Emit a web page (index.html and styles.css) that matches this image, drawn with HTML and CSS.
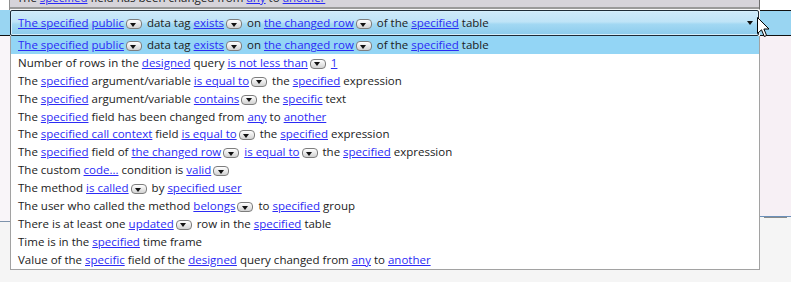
FILE: index.html
```html
<!DOCTYPE html>
<html lang="en">
<head>
    <meta charset="UTF-8">
    <title>Condition picker</title>
    <link rel="stylesheet" href="styles.css">
</head>
<body>

<div class="screen">
    <!-- top strip: previous row, mostly scrolled away -->
    <div class="side-top"></div>
    <div class="prev-row">
        <div class="line">The <a class="lnk">specified</a> field has been changed from <a class="lnk">any</a> to <a class="lnk">another</a></div>
    </div>
    <div class="side-top right"></div>

    <!-- combo row -->
    <div class="side-blue"></div>
    <div class="combo">
        <div class="line"><a class="lnk">The specified</a> <a class="lnk">public</a><span class="dd"></span> data tag <a class="lnk">exists</a><span class="dd"></span> on <a class="lnk">the changed row</a><span class="dd"></span> of the <a class="lnk">specified</a> table</div>
        <span class="combo-arrow"></span>
    </div>
    <div class="side-blue right"></div>

    <!-- dropdown list -->
    <div class="side-panel"></div>
    <div class="list">
        <div class="item selected"><a class="lnk">The specified</a> <a class="lnk">public</a><span class="dd"></span> data tag <a class="lnk">exists</a><span class="dd"></span> on <a class="lnk">the changed row</a><span class="dd"></span> of the <a class="lnk">specified</a> table</div>
        <div class="item">Number of rows in the <a class="lnk">designed</a> query <a class="lnk">is not less than</a><span class="dd"></span> <a class="lnk">1</a></div>
        <div class="item">The <a class="lnk">specified</a> argument/variable <a class="lnk">is equal to</a><span class="dd"></span> the <a class="lnk">specified</a> expression</div>
        <div class="item">The <a class="lnk">specified</a> argument/variable <a class="lnk">contains</a><span class="dd"></span> the <a class="lnk">specific</a> text</div>
        <div class="item">The <a class="lnk">specified</a> field has been changed from <a class="lnk">any</a> to <a class="lnk">another</a></div>
        <div class="item">The <a class="lnk">specified call context</a> field <a class="lnk">is equal to</a><span class="dd"></span> the <a class="lnk">specified</a> expression</div>
        <div class="item">The <a class="lnk">specified</a> field of <a class="lnk">the changed row</a><span class="dd"></span> <a class="lnk">is equal to</a><span class="dd"></span> the <a class="lnk">specified</a> expression</div>
        <div class="item">The custom <a class="lnk">code...</a> condition is <a class="lnk">valid</a><span class="dd"></span></div>
        <div class="item">The method <a class="lnk">is called</a><span class="dd"></span> by <a class="lnk">specified user</a></div>
        <div class="item">The user who called the method <a class="lnk">belongs</a><span class="dd"></span> to <a class="lnk">specified</a> group</div>
        <div class="item">There is at least one <a class="lnk">updated</a><span class="dd"></span> row in the <a class="lnk">specified</a> table</div>
        <div class="item">Time is in the <a class="lnk">specified</a> time frame</div>
        <div class="item">Value of the <a class="lnk">specific</a> field of the <a class="lnk">designed</a> query changed from <a class="lnk">any</a> to <a class="lnk">another</a></div>
    </div>
    <div class="side-panel right"></div>

    <!-- mouse pointer over the combo's right edge -->
    <svg class="cursor" width="13" height="21" viewBox="0 0 13 21">
        <path d="M0.5 0.5 L0.5 16.5 L4.5 12.8 L7.3 19.5 L9.6 18.5 L6.9 12 L12 12 Z" fill="#fff" stroke="#000" stroke-width="1"/>
    </svg>
</div>

</body>
</html>
```

FILE: styles.css
```css
body {
    margin: 0;
    padding: 0;
    background-color: #f5f5f5;
    font-family: "Open Sans", "Noto Sans", Arial, sans-serif;
    font-size: 11.5px;
    color: #1b1b1b;
}
.screen {
    position: relative;
    width: 791px;
    height: 282px;
    overflow: hidden;
    display: grid;
    grid-template-columns: 10px 750px 31px;
    grid-template-rows: 10px 26px 1fr;
}
.lnk {
    color: #2b2bf5;
    text-decoration: underline;
}
.line {
    white-space: nowrap;
    line-height: 18px;
}

/* top strip */
.side-top {
    background-color: #ffffff;
    border-right: 1px solid #8f8f8f;
}
.side-top.right {
    border-right: none;
}
.prev-row {
    background-color: #d6d4da;
    border-right: 1px solid #6f6f6f;
    border-bottom: 1px solid #f8f8f8;
    box-shadow: inset 0 -2px 0 #9a9a9a;
    padding-left: 7px;
    overflow: hidden;
}
.prev-row .line {
    margin-top: -11px;
}

/* combo row */
.side-blue {
    background-color: #99d5f2;
    border-bottom: 1px solid #111;
}
.side-blue.right {
    border-top: 1px solid #111;
}
.combo {
    display: flex;
    align-items: center;
    justify-content: space-between;
    padding: 0 7px 0 7px;
    border: 1px solid #1d2a36;
    border-radius: 2px;
    box-shadow: inset 0 0 0 1px #d4eefb;
    background: linear-gradient(#cfeafa 0%, #bfe4f7 45%, #a2d8f3 55%, #8ccbec 100%);
    margin-right: 1px;
}
.combo-arrow {
    width: 0;
    height: 0;
    border-left: 3px solid transparent;
    border-right: 3px solid transparent;
    border-top: 4px solid #111;
    margin-right: -2px;
}

/* list */
.list {
    background-color: #ffffff;
    border: 1px solid #a2a2a2;
    border-top: none;
    align-self: start;
}
.item {
    height: 17.9px;
    line-height: 18px;
    padding-left: 7px;
    white-space: nowrap;
}
.item.selected {
    background-color: #93d5f5;
}
.dd {
    display: inline-block;
    position: relative;
    width: 14px;
    height: 8px;
    margin-left: 2px;
    margin-right: 2px;
    vertical-align: -2px;
    border: 1px solid #7d7d7d;
    border-radius: 4px;
    background: linear-gradient(#ffffff, #d2d2d2);
}
.dd::after {
    content: "";
    position: absolute;
    left: 3.5px;
    top: 2.5px;
    border-left: 3.5px solid transparent;
    border-right: 3.5px solid transparent;
    border-top: 4px solid #111;
}

/* side panels below the combo row */
.side-panel {
    height: 185px;
    background-color: #f9f5f9;
    border-bottom: 1px solid #7d93ab;
}
.side-panel.right {
    height: 180px;
    background-color: #f7f0f5;
    border-bottom: 1px solid #6b8fb9;
    box-shadow: 0 5px 0 -4px #8a8a8a;
}

.cursor {
    position: absolute;
    left: 757px;
    top: 17px;
}
```
